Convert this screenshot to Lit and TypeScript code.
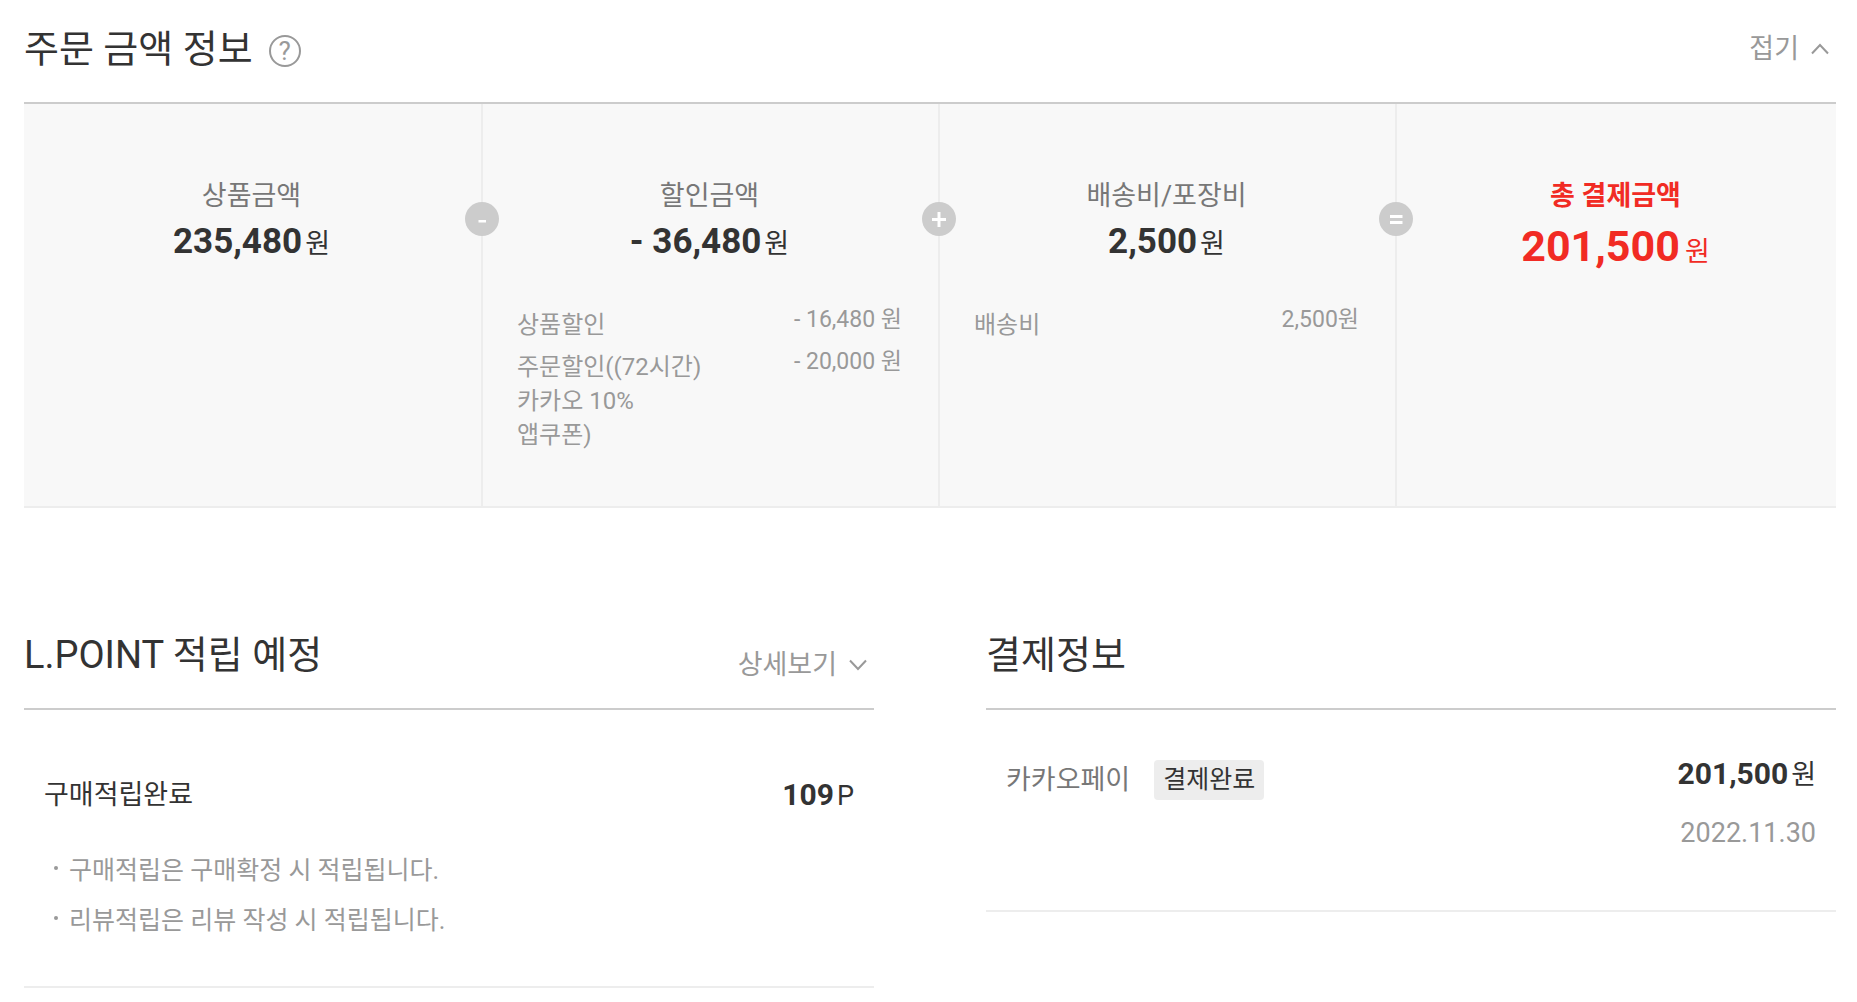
import { LitElement, html, css, svg } from "lit";
import { customElement, property } from "lit/decorators.js";

interface Detail {
  label: string;
  value: string;
}

interface Amount {
  title: string;
  value: string;
  operator?: "minus" | "plus" | "equals";
  total?: boolean;
  details: Detail[];
}

const AMOUNTS: Amount[] = [
  { title: "상품금액", value: "235,480", operator: "minus", details: [] },
  {
    title: "할인금액",
    value: "- 36,480",
    operator: "plus",
    details: [
      { label: "상품할인", value: "- 16,480 원" },
      { label: "주문할인((72시간) 카카오 10% 앱쿠폰)", value: "- 20,000 원" },
    ],
  },
  {
    title: "배송비/포장비",
    value: "2,500",
    operator: "equals",
    details: [{ label: "배송비", value: "2,500원" }],
  },
  { title: "총 결제금액", value: "201,500", total: true, details: [] },
];

const OPERATORS = {
  minus: { label: "빼기", shape: svg`<path d="M13.5 19.2H21" stroke-width="2.4" />` },
  plus: { label: "더하기", shape: svg`<path d="M10 17.5H24M17 10V25" stroke-width="3" />` },
  equals: { label: "결과", shape: svg`<path d="M11 14.5H23.5M11 20.5H23.5" stroke-width="2.8" />` },
};

@customElement("app-chevron")
export class AppChevron extends LitElement {
  @property() direction: "up" | "down" = "down";

  static styles = css`
    :host {
      display: block;
      width: 18px;
      height: 12px;
    }
    .icon {
      display: block;
      fill: none;
      stroke: #999;
      stroke-width: 2;
    }
  `;

  render() {
    const d = this.direction === "up" ? "M1 10.5L9 2L17 10.5" : "M1 1.5L9 10L17 1.5";
    return html`<svg class="icon" width="18" height="12" viewBox="0 0 18 12" aria-hidden="true">
      <path d=${d} />
    </svg>`;
  }
}

@customElement("app-root")
export class AppRoot extends LitElement {
  static styles = css`
    :host {
      display: block;
      box-sizing: border-box;
      padding: 0 21px 14px 24px;
      background: #fff;
      color: #333;
      font-family: Roboto, "Noto Sans CJK KR", sans-serif;
      font-size: 27px;
      line-height: 40px;
      word-break: keep-all;
    }
    * {
      box-sizing: border-box;
    }
    h2,
    h3,
    p,
    dl,
    dd,
    ul {
      margin: 0;
      padding: 0;
      font-weight: 400;
      font-size: inherit;
    }
    button {
      margin: 0;
      padding: 0;
      border: 0;
      background: none;
      font: inherit;
      color: #999;
      cursor: pointer;
    }
    .head {
      display: flex;
      align-items: center;
      justify-content: space-between;
      height: 104px;
      padding-bottom: 4px;
      border-bottom: 2px solid #ccc;
    }
    .heading {
      display: flex;
      align-items: center;
      gap: 16px;
    }
    .title {
      font-size: 38px;
      line-height: 56px;
    }
    .help {
      width: 32px;
      height: 32px;
      margin-top: 4px;
      border: 2px solid #999;
      border-radius: 50%;
      font-size: 26px;
      line-height: 28px;
    }
    .toggle {
      display: flex;
      align-items: center;
      gap: 12px;
      padding-right: 7px;
    }
    .amounts {
      display: grid;
      grid-template-columns: 459fr 457fr 457fr 439fr;
      min-height: 404px;
      background: #f8f8f8;
      border-bottom: 2px solid #ededed;
    }
    .amount {
      position: relative;
      padding: 72px 36px 54px 34px;
      border-right: 2px solid #ededed;
      text-align: center;
    }
    .amount:last-child {
      border-right: 0;
    }
    .amount-title {
      color: #777;
    }
    .figure {
      font-size: 35px;
      line-height: 52px;
    }
    .unit {
      margin-left: 3px;
      font-size: 27px;
    }
    .strong {
      font-weight: 700;
    }
    .total,
    .total .amount-title {
      color: #f12b24;
    }
    .total .amount-title {
      font-weight: 700;
    }
    .total .figure {
      font-size: 43px;
      line-height: 60px;
    }
    .total .unit {
      margin-left: 5px;
    }
    .operator {
      position: absolute;
      top: 98px;
      right: -18px;
      z-index: 1;
      width: 34px;
      height: 34px;
      border-radius: 50%;
      background: #ccc;
      fill: none;
      stroke: #fff;
    }
    .details {
      display: grid;
      gap: 8px;
      margin-top: 38px;
      color: #999;
      font-size: 24px;
      line-height: 34px;
      text-align: left;
    }
    .detail {
      display: flex;
      justify-content: space-between;
      align-items: flex-start;
    }
    .detail dt {
      max-width: 48%;
    }
    .detail dd {
      font-size: 23px;
      line-height: 24px;
    }
    .panels {
      display: grid;
      grid-template-columns: 1fr 1fr;
      align-items: start;
      gap: 112px;
      margin-top: 98px;
    }
    .panel {
      border-bottom: 2px solid #ededed;
    }
    .panel .toggle {
      padding-top: 20px;
    }
    .row {
      display: flex;
      justify-content: space-between;
      align-items: flex-start;
      padding: 0 20px;
    }
    .points {
      padding-top: 65px;
    }
    .sum {
      font-size: 30px;
    }
    .notes {
      list-style: none;
      padding: 30px 20px 40px 30px;
      color: #999;
      font-size: 25px;
      line-height: 50px;
    }
    .note {
      display: flex;
      gap: 11px;
    }
    .note::before {
      content: "";
      width: 4px;
      height: 4px;
      margin-top: 20px;
      border-radius: 50%;
      background: #999;
    }
    .payment {
      padding-top: 44px;
      padding-bottom: 57px;
    }
    .method {
      display: flex;
      align-items: center;
      gap: 24px;
      padding-top: 6px;
      color: #777;
    }
    .badge {
      padding: 0 9px;
      border-radius: 4px;
      background: #ededed;
      color: #333;
      font-size: 25px;
    }
    .paid {
      display: grid;
      gap: 18px;
      text-align: right;
    }
    .date {
      color: #999;
    }
  `;

  private renderAmount(a: Amount) {
    const op = a.operator ? OPERATORS[a.operator] : undefined;
    return html`<section class="amount ${a.total ? "total" : ""}">
      <h3 class="amount-title">${a.title}</h3>
      <p class="figure"><span class="strong">${a.value}</span><span class="unit">원</span></p>
      ${a.details.length
        ? html`<dl class="details">
            ${a.details.map(
              (d) => html`<div class="detail"><dt>${d.label}</dt><dd>${d.value}</dd></div>`,
            )}
          </dl>`
        : ""}
      ${op
        ? html`<svg class="operator" viewBox="0 0 34 34" role="img" aria-label=${op.label}>
            ${op.shape}
          </svg>`
        : ""}
    </section>`;
  }

  render() {
    return html`
      <section>
        <header class="head">
          <div class="heading">
            <h2 class="title">주문 금액 정보</h2>
            <button class="help" type="button">?</button>
          </div>
          <button class="toggle" type="button">
            접기<app-chevron direction="up"></app-chevron>
          </button>
        </header>
        <div class="amounts">${AMOUNTS.map((a) => this.renderAmount(a))}</div>
      </section>
      <div class="panels">
        <section class="panel">
          <header class="head">
            <h2 class="title">L.POINT 적립 예정</h2>
            <button class="toggle" type="button">
              상세보기<app-chevron direction="down"></app-chevron>
            </button>
          </header>
          <div class="row points">
            <h3>구매적립완료</h3>
            <p class="sum"><span class="strong">109</span><span class="unit">P</span></p>
          </div>
          <ul class="notes">
            <li class="note">구매적립은 구매확정 시 적립됩니다.</li>
            <li class="note">리뷰적립은 리뷰 작성 시 적립됩니다.</li>
          </ul>
        </section>
        <section class="panel">
          <header class="head"><h2 class="title">결제정보</h2></header>
          <div class="row payment">
            <h3 class="method">카카오페이<span class="badge">결제완료</span></h3>
            <div class="paid">
              <p class="sum"><span class="strong">201,500</span><span class="unit">원</span></p>
              <p class="date">2022.11.30</p>
            </div>
          </div>
        </section>
      </div>
    `;
  }
}
